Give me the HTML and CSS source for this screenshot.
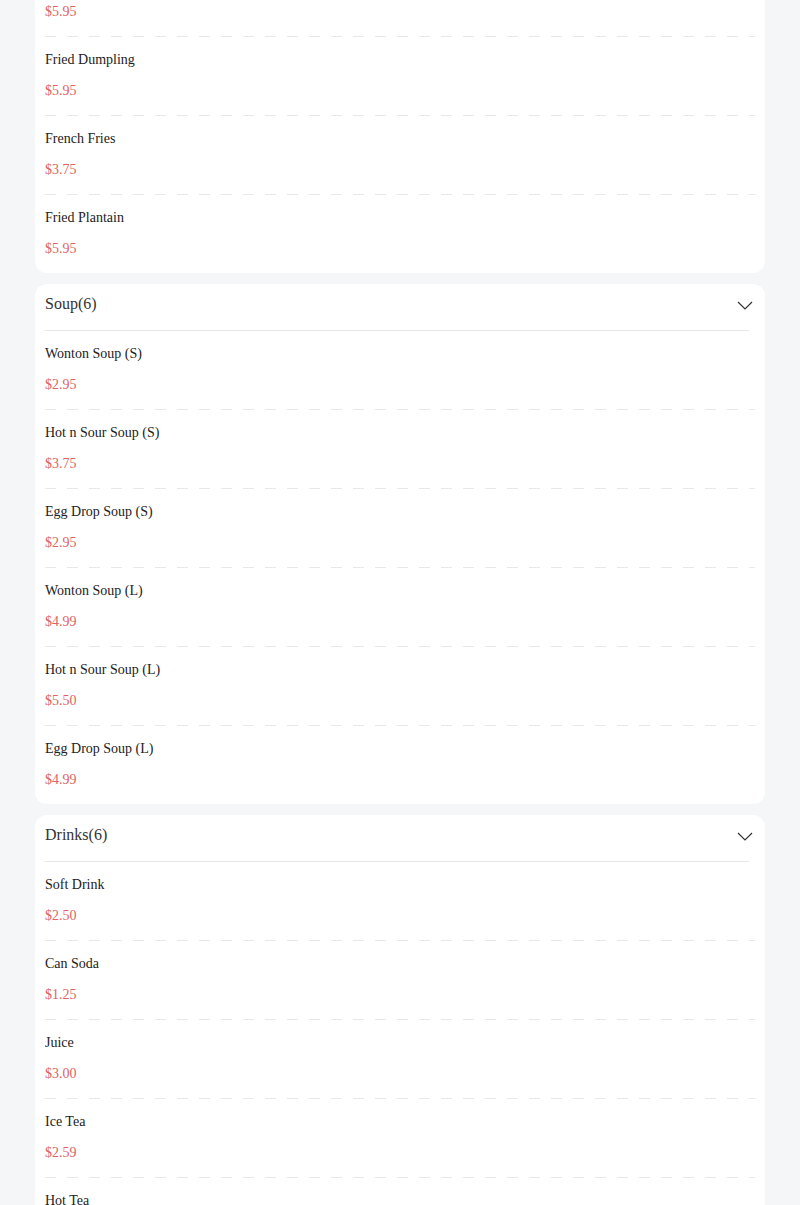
FILE: index.html
```html
<!DOCTYPE html>
<html>
<head>
<meta charset="utf-8">
<link rel="stylesheet" href="styles.css">
</head>
<body>
<div class="menu">
  <section class="card">
    <div class="item"><div class="name">Spring Roll</div><div class="price">$5.95</div></div>
    <div class="item"><div class="name">Fried Dumpling</div><div class="price">$5.95</div></div>
    <div class="item"><div class="name">French Fries</div><div class="price">$3.75</div></div>
    <div class="item"><div class="name">Fried Plantain</div><div class="price">$5.95</div></div>
  </section>
  <section class="card">
    <div class="head"><span class="title">Soup(6)</span>
      <svg class="chev" viewBox="0 0 16 9" width="16" height="9"><path d="M1 1 L8 8 L15 1" fill="none" stroke="#333" stroke-width="1.2"/></svg>
    </div>
    <div class="rule"></div>
    <div class="item"><div class="name">Wonton Soup (S)</div><div class="price">$2.95</div></div>
    <div class="item"><div class="name">Hot n Sour Soup (S)</div><div class="price">$3.75</div></div>
    <div class="item"><div class="name">Egg Drop Soup (S)</div><div class="price">$2.95</div></div>
    <div class="item"><div class="name">Wonton Soup (L)</div><div class="price">$4.99</div></div>
    <div class="item"><div class="name">Hot n Sour Soup (L)</div><div class="price">$5.50</div></div>
    <div class="item"><div class="name">Egg Drop Soup (L)</div><div class="price">$4.99</div></div>
  </section>
  <section class="card">
    <div class="head"><span class="title">Drinks(6)</span>
      <svg class="chev" viewBox="0 0 16 9" width="16" height="9"><path d="M1 1 L8 8 L15 1" fill="none" stroke="#333" stroke-width="1.2"/></svg>
    </div>
    <div class="rule"></div>
    <div class="item"><div class="name">Soft Drink</div><div class="price">$2.50</div></div>
    <div class="item"><div class="name">Can Soda</div><div class="price">$1.25</div></div>
    <div class="item"><div class="name">Juice</div><div class="price">$3.00</div></div>
    <div class="item"><div class="name">Ice Tea</div><div class="price">$2.59</div></div>
    <div class="item"><div class="name">Hot Tea</div><div class="price">$1.50</div></div>
    <div class="item"><div class="name">Bottle Water</div><div class="price">$1.50</div></div>
  </section>
</div>
</body>
</html>
```
FILE: styles.css
```css
html, body {
  margin: 0;
  padding: 0;
  background: #f5f6f8;
  font-family: "Liberation Serif", "Times New Roman", serif;
  overflow: hidden;
}
.menu {
  display: flex;
  flex-direction: column;
  gap: 10.5px;
  margin: -42px 35px 0;
}
.card {
  background: #fff;
  border-radius: 12px;
  display: flex;
  flex-direction: column;
}
.head {
  display: flex;
  justify-content: space-between;
  align-items: center;
  padding: 9.5px 12px 15px 10px;
  height: 22px;
}
.title {
  font-size: 16px;
  line-height: 22px;
  color: #333;
}
.chev {
  display: block;
  margin-top: 2px;
}
.rule {
  height: 1px;
  background: #e6e6e6;
  margin: 0 16px 0 10px;
}
.item {
  margin: 0 10px;
  padding: 13px 0 15px;
  background-image: linear-gradient(to right, #e8e8e8 0 11px, transparent 11px 22px);
  background-size: 22px 1px;
  background-repeat: repeat-x;
  background-position: left bottom;
}
.item:last-child {
  background-image: none;
  padding-bottom: 14px;
}
.name {
  font-size: 14px;
  line-height: 20px;
  color: #222;
}
.price {
  font-size: 14px;
  line-height: 20px;
  margin-top: 11px;
  color: #e06262;
}
```
